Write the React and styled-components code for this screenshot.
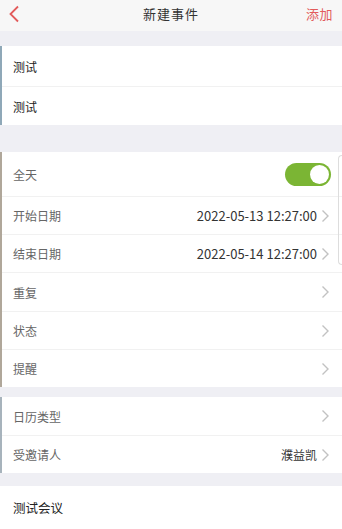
import React from "react";
import styled, { createGlobalStyle } from "styled-components";

const Global = createGlobalStyle`
  html, body { margin: 0; padding: 0; background: #efeff4; }
  body { font-family: "Noto Sans CJK SC", "Noto Sans", sans-serif; }
`;

const Page = styled.div`
  width: 342px;
  height: 529px;
  overflow: hidden;
  background: #efeff4;
  position: relative;
`;

const Header = styled.div`
  height: 31px;
  background: #f7f7f7;
  display: flex;
  align-items: center;
  justify-content: space-between;
  padding: 0 9px 4px 8px;
  box-sizing: border-box;
`;

const Title = styled.div`
  font-size: 13px;
  letter-spacing: 1px;
  color: #333;
  position: absolute;
  left: 0;
  right: 0;
  top: 4px;
  text-align: center;
  pointer-events: none;
`;

const HeaderAction = styled.div`
  font-size: 13px;
  line-height: 18px;
  color: #e25b5b;
  letter-spacing: 0.5px;
`;

const Gap = styled.div`
  height: ${(p) => p.h}px;
`;

const Group = styled.div`
  background: #fff;
  border-left: 2px solid ${(p) => p.edge || "transparent"};
`;

const Row = styled.div`
  height: ${(p) => p.h || 39}px;
  display: flex;
  align-items: center;
  padding: 0 12px 0 11px;
  box-sizing: border-box;
  border-top: ${(p) => (p.first ? "none" : "1px solid #f1f1f1")};
`;

const Label = styled.div`
  flex: 1;
  font-size: ${(p) => (p.big ? 12.5 : 12)}px;
  color: ${(p) => (p.dark ? "#222" : "#666")};
`;

const Value = styled.div`
  font-size: ${(p) => (p.small ? 12 : 13)}px;
  color: #333;
  margin-right: 4px;
`;

const Switch = styled.div`
  width: 46px;
  height: 23px;
  border-radius: 12px;
  background: #7bb534;
  position: relative;
  margin-right: -1px;
`;

const Knob = styled.div`
  position: absolute;
  right: 2px;
  top: 2px;
  width: 19px;
  height: 19px;
  border-radius: 50%;
  background: #fff;
`;

const Chevron = () => (
  <svg width="9" height="14" viewBox="0 0 9 14">
    <path d="M1.5 1.5 L7 7 L1.5 12.5" fill="none" stroke="#c2c2c2" strokeWidth="1.4" />
  </svg>
);

const Back = () => (
  <svg width="12" height="18" viewBox="0 0 12 18">
    <path d="M10 1.5 L2.5 9 L10 16.5" fill="none" stroke="#e25b5b" strokeWidth="1.8" />
  </svg>
);

const SideEdge = styled.div`
  position: absolute;
  right: 0;
  top: 155px;
  width: 4px;
  height: 110px;
  border: 1px solid #ddd;
  border-right: none;
  border-radius: 4px 0 0 4px;
  box-sizing: border-box;
`;

export default function App() {
  return (
    <Page>
      <Global />
      <Header>
        <Back />
        <Title>新建事件</Title>
        <HeaderAction>添加</HeaderAction>
      </Header>
      <Gap h={15} />
      <Group edge="#8fa8b8">
        <Row first h={40}><Label dark>测试</Label></Row>
        <Row h={39}><Label dark>测试</Label></Row>
      </Group>
      <Gap h={27} />
      <Group edge="#b0a79a">
        <Row first h={44}>
          <Label>全天</Label>
          <Switch><Knob /></Switch>
        </Row>
        <Row h={38}><Label>开始日期</Label><Value>2022-05-13 12:27:00</Value><Chevron /></Row>
        <Row h={38}><Label>结束日期</Label><Value>2022-05-14 12:27:00</Value><Chevron /></Row>
        <Row h={39}><Label>重复</Label><Chevron /></Row>
        <Row h={38}><Label>状态</Label><Chevron /></Row>
        <Row h={38}><Label>提醒</Label><Chevron /></Row>
      </Group>
      <Gap h={10} />
      <Group edge="#a7b3bc">
        <Row first h={38}><Label>日历类型</Label><Chevron /></Row>
        <Row h={38}><Label>受邀请人</Label><Value small>濮益凯</Value><Chevron /></Row>
      </Group>
      <Gap h={13} />
      <Group>
        <Row first h={43}><Label dark big>测试会议</Label></Row>
      </Group>
      <SideEdge />
    </Page>
  );
}
